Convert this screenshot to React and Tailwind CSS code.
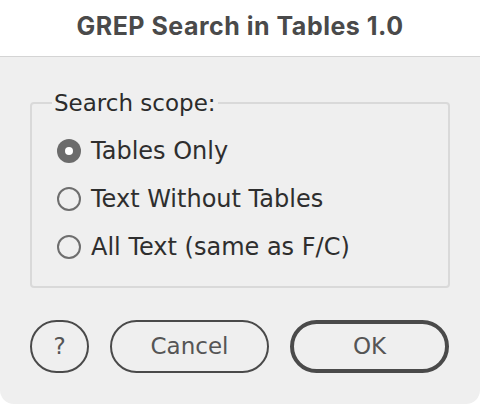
import { useState } from 'react'

const options = ['Tables Only', 'Text Without Tables', 'All Text (same as F/C)']

function Radio({ checked }) {
  if (checked) {
    return (
      <span className="flex h-[24px] w-[24px] shrink-0 items-center justify-center rounded-full bg-[#6b6b6b]">
        <span className="h-[8px] w-[8px] rounded-full bg-white" />
      </span>
    )
  }
  return <span className="h-[24px] w-[24px] shrink-0 rounded-full border-2 border-[#6e6e6e]" />
}

export default function App() {
  const [scope, setScope] = useState(0)

  return (
    <div className="h-[404px] w-[480px] bg-white font-['DejaVu_Sans',sans-serif]">
      <div className="flex h-[57px] items-center justify-center border-b border-[#d4d4d4] pb-[2px]">
        <h1 className="font-['Inter',sans-serif] text-[25px] font-bold tracking-[0.5px] text-[#4a4a4a]">
          GREP Search in Tables 1.0
        </h1>
      </div>

      <div className="flex h-[347px] flex-col rounded-b-[14px] bg-[#efefef] px-[30px]">
        <fieldset className="mt-[33px] rounded-[4px] border-2 border-[#d9d9d9] pb-[15px] pl-[25px]">
          <legend className="ml-[-5px] px-[2px] text-[23px] leading-[26px] text-[#2b2b2b]">Search scope:</legend>
          <div className="flex flex-col pt-[11px]">
            {options.map((o, i) => (
              <label
                key={o}
                onClick={() => setScope(i)}
                className="flex h-[48px] cursor-default items-center gap-[10px] text-[24px] text-[#2e2e2e]"
              >
                <Radio checked={scope === i} />
                {o}
              </label>
            ))}
          </div>
        </fieldset>

        <div className="mt-[32px] flex items-center gap-[21px]">
          <button className="flex h-[53px] w-[59px] items-center justify-center rounded-full border-2 border-[#4a4a4a] text-[23px] text-[#555]">
            ?
          </button>
          <button className="flex h-[53px] w-[159px] items-center justify-center rounded-full border-2 border-[#4a4a4a] text-[23px] text-[#555]">
            Cancel
          </button>
          <button className="flex h-[53px] w-[159px] items-center justify-center rounded-full border-4 border-[#4a4a4a] text-[23px] text-[#555]">
            OK
          </button>
        </div>
      </div>
    </div>
  )
}
